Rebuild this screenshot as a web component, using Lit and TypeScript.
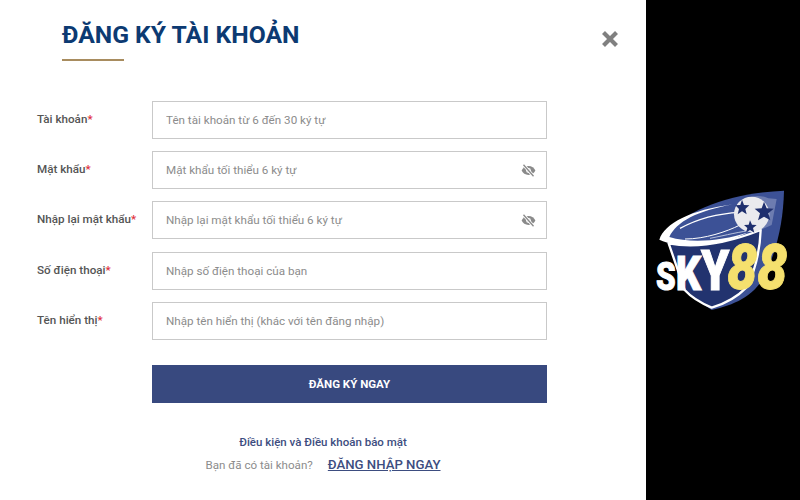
import { LitElement, html, css, svg } from "lit";
import { customElement } from "lit/decorators.js";

const fields = [
  { label: "Tài khoản", ph: "Tên tài khoản từ 6 đến 30 ký tự", eye: false },
  { label: "Mật khẩu", ph: "Mật khẩu tối thiểu 6 ký tự", eye: true },
  { label: "Nhập lại mật khẩu", ph: "Nhập lại mật khẩu tối thiểu 6 ký tự", eye: true },
  { label: "Số điện thoại", ph: "Nhập số điện thoại của bạn", eye: false },
  { label: "Tên hiển thị", ph: "Nhập tên hiển thị (khác với tên đăng nhập)", eye: false },
];

const eye = html`<svg class="eye" viewBox="0 0 16 14" width="15" height="13" aria-hidden="true">
  <path fill="#8a8a8a" d="M8 2.200C4.600 2.200 1.800 4.400.6 7c1.200 2.600 4 4.800 7.400 4.800S14.200 9.600 15.400 7C14.200 4.400 11.400 2.200 8 2.200Z"/>
  <circle cx="8" cy="7" r="2.600" fill="#fff"/>
  <circle cx="8" cy="7" r="1.400" fill="#8a8a8a"/>
  <path d="M2.600 .8 13.400 13.200" stroke="#fff" stroke-width="3.200"/>
  <path d="M2.600 .8 13.400 13.200" stroke="#8a8a8a" stroke-width="1.400"/>
</svg>`;

const logo = svg`<svg class="logo" viewBox="18 0 462 450" width="154" height="150" aria-label="SKY88">
  <path fill="#3c5196" d="M75 185C130 100 290 52 432 47C430 140 410 230 372 305C340 365 280 390 215 405L150 360L85 210Z"/>
  <path fill="#22336f" stroke="#fff" stroke-width="7" stroke-linejoin="round" d="M86 205C170 222 260 205 362 165C360 225 345 285 322 335C290 368 250 388 215 398C185 385 155 368 134 345Z"/>
  <path fill="#fff" d="M58 194C75 145 150 105 280 88C170 108 110 140 88 186C150 205 240 200 325 172C240 215 130 225 58 194Z"/>
  <path fill="none" stroke="#fff" stroke-width="4" d="M120 160C175 130 240 115 300 112"/>
  <path fill="none" stroke="#fff" stroke-width="3" d="M135 192C195 192 260 170 300 150"/>
  <path fill="none" stroke="#b9c2dc" stroke-width="3" d="M210 190C260 180 300 170 340 165"/>
  <path fill="#fff" d="M300 85Q340 50 385 70L410 72L395 150L350 170L310 160Z" opacity=".25"/>
  <circle cx="335" cy="118" r="53" fill="#eaeaee"/>
  <path fill="#1f2f6e" d="M372 80l8 20 21 1-16 14 6 21-19-11-18 11 6-21-16-14 21-1ZM306 74l6 16 16 1-12 11 4 16-14-9-13 9 4-16-11-11 15-1ZM330 136l6 13 14 1-11 9 4 14-13-8-12 8 4-14-10-9 14-1Z"/>
  <text class="sky" transform="translate(48 345) scale(.82 1)"><tspan font-size="115">S</tspan><tspan font-size="145">K</tspan><tspan font-size="165">Y</tspan></text>
  <text class="num" x="262" y="343" textLength="180" lengthAdjust="spacingAndGlyphs">88</text>
</svg>`;

@customElement("app-root")
export class AppRoot extends LitElement {
  static styles = css`
    :host {
      display: flex;
      width: 800px;
      height: 500px;
      background: #000;
      font-family: Roboto, "Noto Sans", sans-serif;
      overflow: hidden;
    }
    .panel {
      position: relative;
      box-sizing: border-box;
      width: 646px;
      height: 500px;
      background: #fff;
      padding: 19px 99px 0 37px;
      display: flex;
      flex-direction: column;
    }
    h1 {
      margin: 0 0 0 25px;
      font-size: 24.7px;
      line-height: 31px;
      font-weight: 700;
      color: #0c3a72;
      white-space: nowrap;
    }
    .rule {
      width: 62px;
      height: 2px;
      margin: 9px 0 39.7px 25px;
      background: #a88c5f;
    }
    .rows {
      display: flex;
      flex-direction: column;
      gap: 12.4px;
    }
    .row {
      display: flex;
      align-items: center;
    }
    label {
      width: 115px;
      flex: none;
      font-size: 11.65px;
      font-weight: 500;
      color: #555;
      white-space: nowrap;
      margin-top: -2px;
    }
    label span {
      color: #e0303c;
    }
    .box {
      flex: 1;
      box-sizing: border-box;
      height: 38px;
      display: flex;
      align-items: center;
      border: 1px solid #c9c9c9;
      padding: 0 10px 0 13px;
    }
    input {
      flex: 1;
      min-width: 0;
      border: 0;
      outline: 0;
      padding: 0;
      background: transparent;
      font: 400 11.65px Roboto, sans-serif;
      color: #555;
    }
    input::placeholder {
      color: #8c8c8c;
      opacity: 1;
    }
    .eye {
      flex: none;
    }
    .submit {
      margin: 24.300px 0 0 115px;
      height: 38px;
      border: 0;
      padding: 0;
      background: #38497f;
      color: #fff;
      font: 700 11.5px Roboto, sans-serif;
    }
    .terms {
      margin: 31px -99px 0 -37px;
      text-align: center;
      font-size: 11.5px;
      line-height: 16px;
      font-weight: 500;
      color: #3d4d80;
    }
    .login {
      margin: 7px -99px 0 -37px;
      display: flex;
      justify-content: center;
      align-items: baseline;
      gap: 15px;
      font-size: 11.6px;
      color: #8c8c8c;
    }
    .login a {
      font-size: 13.2px;
      font-weight: 500;
      color: #3d4d80;
      text-decoration: underline;
    }
    .close {
      position: absolute;
      top: 30px;
      right: 27px;
      width: 18px;
      height: 18px;
      padding: 0;
      border: 0;
      background: none;
      display: flex;
    }
    aside {
      flex: 1;
      display: flex;
      align-items: center;
    }
    .logo {
      display: block;
    }
    .sky {
      font-family: Roboto, sans-serif;
      font-weight: 900;
      fill: #fff;
      stroke: #fff;
      stroke-width: 3px;
    }
    .num {
      font: italic 900 190px Roboto, sans-serif;
      fill: #f5e06e;
      stroke: #f5e06e;
      stroke-width: 3px;
    }
  `;

  render() {
    return html`
      <section class="panel">
        <h1>ĐĂNG KÝ TÀI KHOẢN</h1>
        <div class="rule"></div>
        <button class="close" aria-label="Đóng">
          <svg viewBox="0 0 18 18" width="18" height="18">
            <path d="M2.500 2.500 15.500 15.500M15.500 2.500 2.500 15.500" stroke="#808080" stroke-width="4.200"/>
          </svg>
        </button>
        <div class="rows">
          ${fields.map(
            (f) => html`<div class="row">
              <label>${f.label}<span>*</span></label>
              <div class="box">
                <input placeholder=${f.ph} />
                ${f.eye ? eye : ""}
              </div>
            </div>`
          )}
        </div>
        <button class="submit">ĐĂNG KÝ NGAY</button>
        <div class="terms">Điều kiện và Điều khoản bảo mật</div>
        <div class="login"><span>Bạn đã có tài khoản?</span><a>ĐĂNG NHẬP NGAY</a></div>
      </section>
      <aside>${logo}</aside>
    `;
  }
}
